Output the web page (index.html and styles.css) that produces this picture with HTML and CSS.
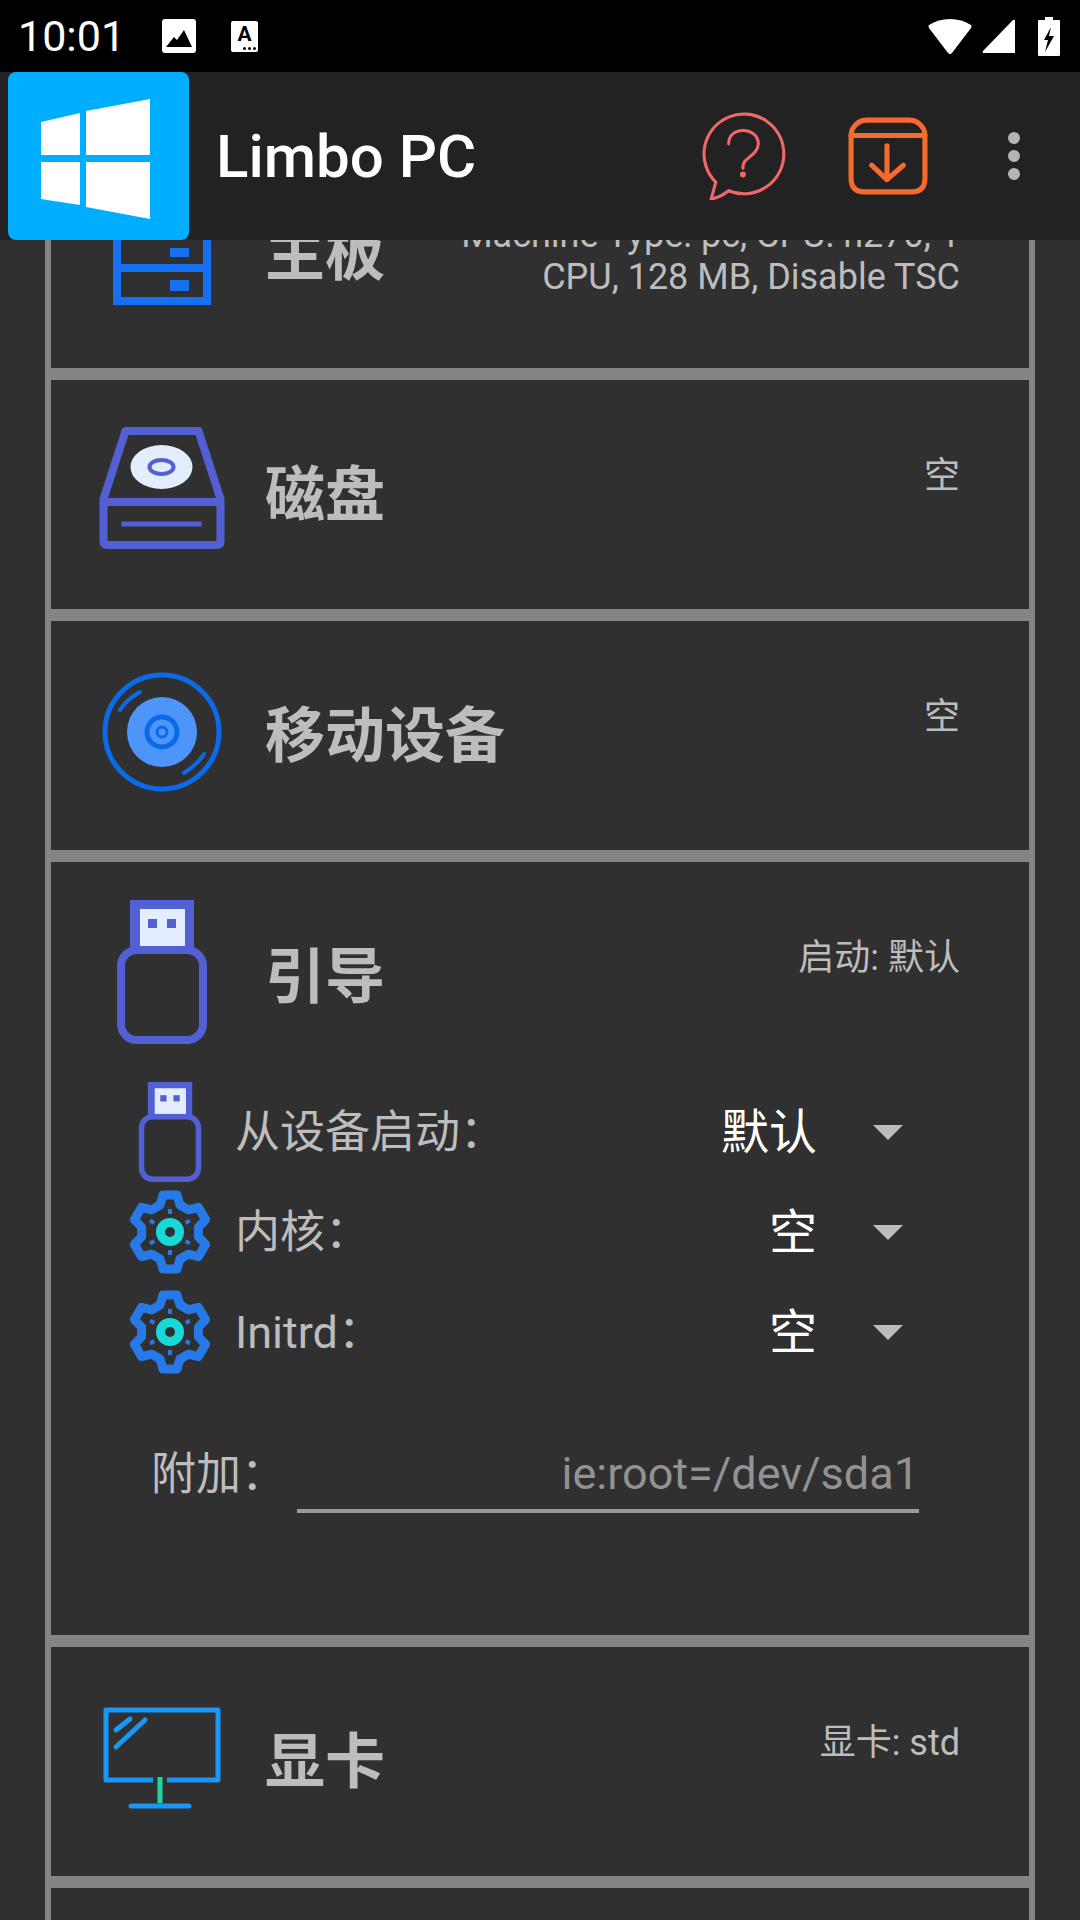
FILE: index.html
```html
<!DOCTYPE html>
<html lang="zh-CN">
<head>
    <meta charset="UTF-8">
    <meta name="viewport" content="width=device-width, initial-scale=1.0">
    <title>Limbo PC</title>
    <link rel="stylesheet" href="styles.css">
</head>
<body>
    <div class="status-bar">
        <span class="clock">10:01</span>
        <svg class="status-pic" viewBox="0 0 34 34"><rect width="34" height="34" rx="3" fill="#fff"/><path d="M4 28 L12 18 L15 21 L22 11 L30 28 Z" fill="#000"/></svg>
        <span class="status-a"><b>A</b><i></i><i></i><i></i></span>
        <span class="status-right">
            <svg class="wifi" viewBox="0 0 44 37"><path d="M1 7 Q0 8 1 10 L20 35 Q22 37 24 35 L43 10 Q44 8 43 7 C31 -1 13 -1 1 7 Z" fill="#fff"/></svg>
            <svg class="signal" viewBox="0 0 33 34"><path d="M33 2 Q33 0 31 1 L1 32 Q0 34 2 34 H33 Z" fill="#fff"/></svg>
            <svg class="battery" viewBox="0 0 22 39"><path d="M7 0 H15 V3 H21 Q22 3 22 4 V38 Q22 39 21 39 H1 Q0 39 0 38 V4 Q0 3 1 3 H7 Z" fill="#fff"/><path d="M13 10 L6 23 H10 L7 35 L16 19 H11 Z" fill="#000"/></svg>
        </span>
    </div>

    <header class="app-bar">
        <div class="logo">
            <svg viewBox="0 0 181 168" width="181" height="168"><path d="M33 50 L72 41 V83 H33 Z M78 39 L142 27 V83 H78 Z M33 90 H72 V133 L33 127 Z M78 90 H142 V147 L78 135 Z" fill="#fff"/></svg>
        </div>
        <h1 class="app-title">Limbo PC</h1>
        <svg class="act-help" viewBox="0 0 82 86" fill="none" stroke="#f0686c" stroke-width="3"><path d="M13.4 68.6 A39 39 0 1 1 26 77 C21 81 15 84 9 85 Z"/><path d="M26 31 C26 22 33 18 40 18 C49 18 55 24 55 31 C55 39 47 43 42 48 C40 50 40 53 40 55" stroke-linecap="round"/><circle cx="40" cy="61" r="1.4" fill="#f0686c"/></svg>
        <svg class="act-save" viewBox="0 0 78 76" fill="none" stroke="#f56a2e" stroke-width="5" stroke-linecap="round" stroke-linejoin="round"><path d="M3 18 C3 10 10 3 18 3 H60 C68 3 75 10 75 18 V60 Q75 73 62 73 H16 Q3 73 3 60 Z"/><path d="M3 18 H75"/><path d="M38 28 V61 M23 47 L38 61 L54 47"/></svg>
        <span class="menu-dots"><i></i><i></i><i></i></span>
    </header>

    <main class="content">
        <section class="card">
            <div class="card-head">
                <svg class="card-icon icon-board" viewBox="0 0 98 110" fill="none"><path d="M4 4 H94 V106 H4 Z M4 73 H94 M4 37 H94" stroke="#1671f2" stroke-width="8"/><path d="M57 53 H76 V62 H57 Z M57 85 H76 V96 H57 Z" fill="#1671f2"/></svg>
                <h2 class="card-title">主板</h2>
                <p class="card-note">Machine Type: pc, CPU: n270, 1 CPU, 128 MB, Disable TSC</p>
            </div>
        </section>

        <section class="card">
            <div class="card-head">
                <svg class="card-icon icon-disk" viewBox="0 0 125 122" fill="none"><path d="M26 4 H99 L121 72 V114 Q121 118 117 118 H8 Q4 118 4 114 V72 Z M4 75 H121" stroke="#5360d3" stroke-width="8" stroke-linejoin="round"/><path d="M22 97 H102" stroke="#5360d3" stroke-width="5"/><ellipse cx="62" cy="40" rx="31" ry="22" fill="#e4edfd"/><ellipse cx="62" cy="40" rx="12" ry="7" stroke="#5360d3" stroke-width="4"/></svg>
                <h2 class="card-title">磁盘</h2>
                <p class="card-note">空</p>
            </div>
        </section>

        <section class="card">
            <div class="card-head">
                <svg class="card-icon icon-drive" viewBox="0 0 122 122" fill="none"><circle cx="61" cy="61" r="57" stroke="#0a6ae8" stroke-width="5"/><circle cx="61" cy="61" r="35" fill="#4e95fb"/><circle cx="61" cy="61" r="15" stroke="#0a6ae8" stroke-width="5"/><circle cx="61" cy="61" r="5" stroke="#0a6ae8" stroke-width="3"/><path d="M19 39 Q26 28 39 21 M83 102 Q96 94 103 83" stroke="#0a6ae8" stroke-width="4" stroke-linecap="round"/></svg>
                <h2 class="card-title">移动设备</h2>
                <p class="card-note">空</p>
            </div>
        </section>

        <section class="card card-boot">
            <div class="card-head">
                <svg class="card-icon icon-usb" viewBox="0 0 90 144" fill="none"><use href="#usb"/></svg>
                <h2 class="card-title">引导</h2>
                <p class="card-note">启动: 默认</p>
            </div>
            <div class="opt-row">
                <svg class="opt-icon usb" viewBox="0 0 90 144" fill="none"><use href="#usb"/></svg>
                <span class="opt-label">从设备启动：</span>
                <span class="opt-value">默认</span>
                <span class="caret"></span>
            </div>
            <div class="opt-row">
                <svg class="opt-icon" viewBox="0 0 84 84" fill="none"><use href="#gear"/></svg>
                <span class="opt-label">内核：</span>
                <span class="opt-value">空</span>
                <span class="caret"></span>
            </div>
            <div class="opt-row">
                <svg class="opt-icon" viewBox="0 0 84 84" fill="none"><use href="#gear"/></svg>
                <span class="opt-label">Initrd：</span>
                <span class="opt-value">空</span>
                <span class="caret"></span>
            </div>
            <div class="extra-row">
                <span class="opt-label">附加：</span>
                <span class="extra-input">ie:root=/dev/sda1</span>
            </div>
        </section>

        <section class="card">
            <div class="card-head">
                <svg class="card-icon icon-screen" viewBox="0 0 118 102" fill="none"><path d="M3 3 H115 V73 H3 Z" stroke="#1a96f5" stroke-width="5" stroke-linejoin="round"/><path d="M50 69 H64 V78 H50 Z" fill="#303030"/><path d="M57 70 V96" stroke="#1fd6a3" stroke-width="5"/><path d="M28 99 H86" stroke="#1a96f5" stroke-width="5" stroke-linecap="round"/><path d="M13 23 L27 12 M13 40 L42 13" stroke="#1a96f5" stroke-width="5" stroke-linecap="round"/></svg>
                <h2 class="card-title">显卡</h2>
                <p class="card-note">显卡: std</p>
            </div>
        </section>

        <section class="card"></section>
    </main>

    <svg class="defs" width="0" height="0">
        <defs>
            <g id="usb">
                <rect x="13" y="0" width="64" height="54" fill="#5360d3"/>
                <rect x="23" y="9" width="45" height="37" fill="#e4edfd"/>
                <rect x="31" y="19" width="9" height="9" fill="#5360d3"/>
                <rect x="50" y="19" width="9" height="9" fill="#5360d3"/>
                <rect x="4" y="50" width="82" height="90" rx="16" fill="#303030" stroke="#5360d3" stroke-width="8"/>
            </g>
            <g id="gear">
                <path d="M32 15 L35 5 H49 L52 15 L60.4 19.8 L70.5 17.4 L77.5 29.6 L70.4 37.2 V46.8 L77.5 54.4 L70.5 66.6 L60.4 64.2 L52 69 L49 79 H35 L32 69 L23.6 64.2 L13.5 66.6 L6.5 54.4 L13.6 46.8 V37.2 L6.5 29.6 L13.5 17.4 L23.6 19.8 Z" stroke="#2879e8" stroke-width="9" stroke-linejoin="round"/>
                <path d="M42 19 V24 M61.9 30.5 L57.6 33 M61.9 53.5 L57.6 51 M42 65 V60 M22.1 53.5 L26.4 51 M22.1 30.5 L26.4 33" stroke="#2879e8" stroke-width="4"/>
                <circle cx="42" cy="42" r="9.5" stroke="#18d8d8" stroke-width="9"/>
            </g>
        </defs>
    </svg>
</body>
</html>
```

FILE: styles.css
```css
html, body {
    margin: 0;
    padding: 0;
    height: 1920px;
    overflow: hidden;
    background-color: #303030;
    font-family: Roboto, "Noto Sans CJK SC", sans-serif;
}
.defs {
    position: absolute;
}

/* status bar */
.status-bar {
    position: relative;
    z-index: 2;
    height: 72px;
    display: flex;
    align-items: center;
    padding: 0 20px 0 18px;
    background: #000;
    color: #fff;
}
.clock {
    font-size: 43px;
    width: 144px;
}
.status-pic {
    width: 34px;
    height: 34px;
    margin-top: -1px;
}
.status-a {
    position: relative;
    width: 27px;
    height: 31px;
    margin-left: 35px;
    background: #fff;
    border-radius: 2px;
    color: #000;
    font-size: 21px;
    line-height: 26px;
    text-align: center;
}
.status-a i {
    position: absolute;
    bottom: 2px;
    right: 2px;
    width: 3px;
    height: 3px;
    border-radius: 50%;
    background: #000;
}
.status-a i:nth-of-type(2) {
    right: 7px;
}
.status-a i:nth-of-type(3) {
    right: 12px;
}
.status-right {
    margin-left: auto;
    display: flex;
    align-items: center;
}
.wifi {
    width: 44px;
    height: 37px;
}
.signal {
    width: 33px;
    height: 34px;
    margin-left: 10px;
}
.battery {
    width: 22px;
    height: 39px;
    margin-left: 23px;
}

/* action bar */
.app-bar {
    position: relative;
    z-index: 2;
    height: 168px;
    display: flex;
    align-items: center;
    background: #222;
}
.logo {
    width: 181px;
    height: 168px;
    margin-left: 8px;
    background: #00aeff;
    border-radius: 8px;
}
.logo svg {
    display: block;
}
.app-title {
    margin: 0 0 0 27px;
    font-size: 60px;
    font-weight: 500;
    color: #fff;
}
.act-help {
    width: 84px;
    height: 88px;
    margin-left: auto;
}
.act-save {
    width: 80px;
    height: 78px;
    margin-left: 62px;
}
.menu-dots {
    display: flex;
    flex-direction: column;
    gap: 6px;
    margin: 0 60px 0 80px;
}
.menu-dots i {
    width: 12px;
    height: 12px;
    border-radius: 50%;
    background: #b4b4b4;
}

/* cards */
.content {
    margin-top: -107px;
    padding: 0 45px;
}
.card {
    box-sizing: border-box;
    height: 241px;
    border: 6px solid #858585;
}
.card-boot {
    height: 785px;
}
.card-head {
    box-sizing: border-box;
    display: flex;
    height: 229px;
    align-items: center;
    padding: 0 69px 8px 46px;
}
.card-boot .card-head {
    height: 220px;
    padding-bottom: 0;
}
.card-icon {
    width: 130px;
    flex: none;
}
.icon-board {
    height: 110px;
}
.icon-disk {
    height: 122px;
    margin-top: -6px;
}
.icon-drive {
    height: 122px;
}
.icon-usb {
    height: 144px;
}
.icon-screen {
    height: 102px;
}
.card-title {
    margin: 0 0 2px 38px;
    font-size: 60px;
    font-weight: 700;
    color: #bdbdbd;
    white-space: nowrap;
}
.card-note {
    align-self: flex-start;
    margin: 75px 0 0 auto;
    width: 505px;
    font-size: 36px;
    line-height: 42px;
    color: #bdbdbd;
    text-align: right;
}

/* boot options */
.opt-row {
    display: flex;
    align-items: center;
    height: 100px;
    padding-left: 77px;
}
.opt-icon {
    width: 84px;
    height: 84px;
    flex: none;
}
.opt-icon.usb {
    height: 100px;
}
.opt-label {
    flex: none;
    font-size: 45px;
    color: #bdbdbd;
    margin: 0 0 8px 23px;
}
.opt-value {
    margin: 0 0 8px auto;
    font-size: 48px;
    color: #fff;
}
.caret {
    width: 0;
    height: 0;
    margin: 0 126px 0 56px;
    border-left: 15px solid transparent;
    border-right: 15px solid transparent;
    border-top: 15px solid #bdbdbd;
}
.extra-row {
    display: flex;
    align-items: center;
    margin: 56px 0 0 100px;
}
.extra-row .opt-label {
    width: 146px;
    margin: 0 0 18px;
}
.extra-input {
    width: 622px;
    box-sizing: border-box;
    padding: 0 0 9px 0;
    border-bottom: 4px solid #9a9a9a;
    font-size: 45px;
    color: #929292;
    text-align: right;
}
```
